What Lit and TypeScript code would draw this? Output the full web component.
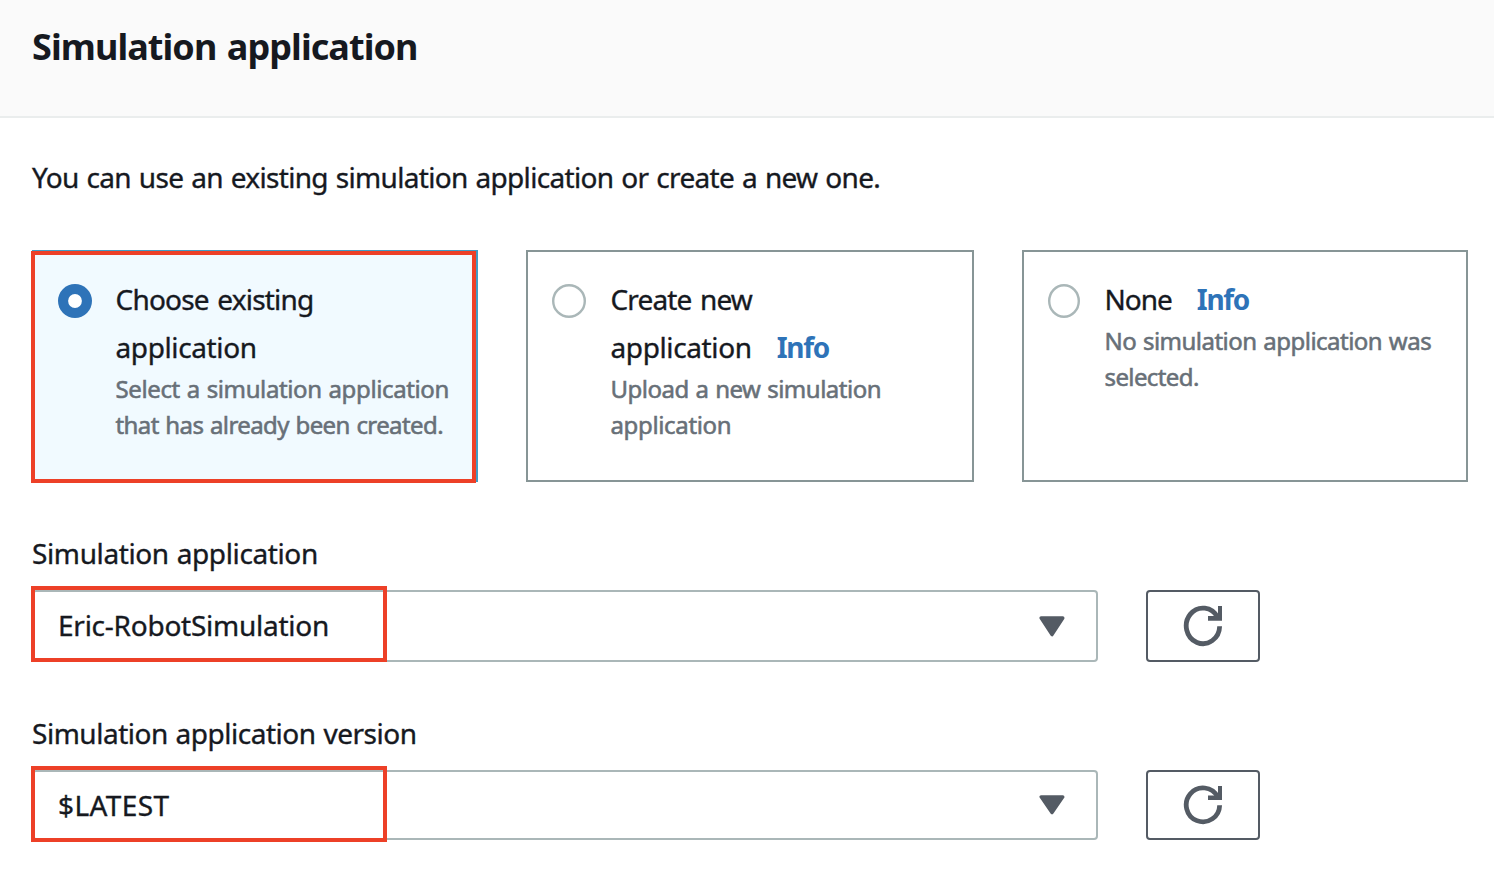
import { LitElement, html, css, nothing } from "lit";
import { customElement, property } from "lit/decorators.js";
import { classMap } from "lit/directives/class-map.js";

type Line = { text: string; track: string };

@customElement("option-tile")
export class OptionTile extends LitElement {
  @property({ attribute: false }) titleLines: Line[] = [];
  @property({ attribute: false }) textLines: Line[] = [];
  @property({ type: Boolean }) info = false;
  @property({ type: Boolean, reflect: true }) selected = false;
  @property() radio = "";

  static styles = css`
    :host { display: block; position: relative; height: 232px; }
    .tile {
      box-sizing: border-box; height: 100%; display: flex; padding: 23px 0 0 24px;
      border: 2px solid #879596; background: #fff;
    }
    .tile.selected { border-color: #429cc4; background: #f1faff; }
    .radio { flex: none; width: 34px; height: 34px; margin-top: 9px; display: block; }
    .body { margin-left: 23.5px; white-space: nowrap; }
    .narrow .radio { width: 32px; }
    .narrow .body { margin-left: 24.5px; }
    .wide .body { margin-left: 24.5px; }
    .title { height: 48px; font-size: 28px; line-height: 48px; color: #16191f; -webkit-text-stroke: 0.35px #16191f; }
    .text { height: 36px; font-size: 24px; line-height: 36px; color: #687078; word-spacing: 1px; -webkit-text-stroke: 0.55px #687078; }
    .info {
      margin-left: 25px; font-size: 28px; font-weight: 700; letter-spacing: -1.3px;
      color: #2e73b8; text-decoration: none; -webkit-text-stroke: 0;
    }
    .marker { position: absolute; left: -1px; top: 1px; width: 445px; height: 232px; box-sizing: border-box; border: 4px solid #ed4027; }
    .choose { letter-spacing: -0.8px; word-spacing: 2px; }
    .app { letter-spacing: -0.38px; }
    .create { letter-spacing: -0.85px; word-spacing: 2px; }
    .none { letter-spacing: -1px; }
    .select { letter-spacing: -0.38px; }
    .that { letter-spacing: -0.6px; }
    .upload { letter-spacing: -0.5px; }
    .uploadb { letter-spacing: -0.35px; }
    .nosim { letter-spacing: -0.52px; }
  `;

  private lines(lines: Line[], kind: string, tail: unknown = nothing) {
    return lines.map(
      (l, i) => html`<div class=${kind}><span class=${l.track}>${l.text}</span>${i === lines.length - 1 ? tail : nothing}</div>`
    );
  }

  render() {
    const narrow = this.radio === "narrow";
    const cx = narrow ? 16 : 17;
    return html`
      <div class=${classMap({ tile: true, selected: this.selected, narrow, wide: this.radio === "wide" })}>
        <svg class="radio" viewBox="0 0 ${cx * 2} 34">
          ${this.selected
            ? html`<svg><circle cx="17" cy="17" r="17" fill="#2e73b8" /><circle cx="17" cy="17" r="6.9" fill="#fff" /></svg>`
            : html`<svg><ellipse cx=${cx} cy="17" rx=${cx - 1.2} ry="15.8" fill="#fff" stroke="#aab7b8" stroke-width="2.4" /></svg>`}
        </svg>
        <div class="body">
          ${this.lines(this.titleLines, "title", this.info ? html`<a class="info">Info</a>` : nothing)}
          ${this.lines(this.textLines, "text")}
        </div>
      </div>
      ${this.selected ? html`<div class="marker"></div>` : nothing}
    `;
  }
}

@customElement("select-field")
export class SelectField extends LitElement {
  @property() label = "";
  @property() value = "";
  @property() kind = "";

  static styles = css`
    :host { display: block; font-size: 28px; color: #16191f; -webkit-text-stroke: 0.35px #16191f; white-space: nowrap; }
    .label { line-height: 42px; height: 58px; word-spacing: 1px; }
    .row { display: flex; gap: 48px; position: relative; }
    .select, .refresh { box-sizing: border-box; height: 72px; border-radius: 4px; background: #fff; display: flex; align-items: center; }
    .select { width: 1066px; border: 2px solid #aab7b8; padding: 0 31px 0 24px; justify-content: space-between; }
    .refresh { width: 114px; border: 2px solid #545b64; justify-content: center; }
    .version .select, .version .refresh { height: 70px; }
    .value { line-height: 66px; height: 68px; }
    .version .value { height: 66px; }
    .arrow { width: 26px; height: 21px; display: block; }
    .icon { width: 40px; height: 42px; display: block; }
    .version .icon { height: 40px; }
    .version .arrow { height: 20px; }
    .marker { position: absolute; left: -1px; top: -4px; width: 356px; height: 76px; box-sizing: border-box; border: 4px solid #ed4027; }
    .name .label { letter-spacing: -0.38px; }
    .name .value { letter-spacing: -0.25px; }
    .version .label { letter-spacing: -0.48px; }
    .version .value { letter-spacing: 0.4px; }
  `;

  render() {
    return html`
      <div class=${this.kind}>
        <div class="label">${this.label}</div>
        <div class="row">
          <div class="select">
            <span class="value">${this.value}</span>
            <svg class="arrow" viewBox="0 0 26 21" preserveAspectRatio="none">
              <path d="M2.2 2H23.8L13 18.6Z" fill="#545b64" stroke="#545b64" stroke-width="3.4" stroke-linejoin="round" />
            </svg>
          </div>
          <div class="refresh">
            <svg class="icon" viewBox="0 0 40 42" preserveAspectRatio="none">
              <path d="M36.65 21.2A16.7 17.8 0 1 1 34.6 12.3" fill="none" stroke="#545b64" stroke-width="4.8" />
              <path d="M35 1H39V15.7H25V11H31.5L35 8.5Z" fill="#545b64" />
            </svg>
          </div>
          <div class="marker"></div>
        </div>
      </div>
    `;
  }
}

@customElement("app-root")
export class AppRoot extends LitElement {
  static styles = css`
    :host { display: block; height: 874px; overflow: hidden; background: #fff; color: #16191f; font-family: "Noto Sans", "Open Sans", sans-serif; }
    header { box-sizing: border-box; height: 118px; padding: 20px 32px; background: #fafafa; border-bottom: 2px solid #eaeded; }
    h2 { margin: 0; font-size: 36px; line-height: 54px; font-weight: 700; letter-spacing: -0.93px; word-spacing: 2px; }
    main { padding: 35px 26px 0 32px; }
    .intro { margin: 0; font-size: 28px; line-height: 48px; letter-spacing: -0.68px; word-spacing: 1.3px; white-space: nowrap; -webkit-text-stroke: 0.35px #16191f; }
    .tiles { display: grid; grid-template-columns: 446px 448px 446px; gap: 48px; margin: 49px 0 50px; }
    .fields { display: grid; gap: 50px; }
  `;

  render() {
    return html`
      <header><h2>Simulation application</h2></header>
      <main>
        <p class="intro">You can use an existing simulation application or create a new one.</p>
        <div class="tiles">
          <option-tile selected
            .titleLines=${[{ text: "Choose existing", track: "choose" }, { text: "application", track: "app" }]}
            .textLines=${[{ text: "Select a simulation application", track: "select" }, { text: "that has already been created.", track: "that" }]}
          ></option-tile>
          <option-tile info radio="wide"
            .titleLines=${[{ text: "Create new", track: "create" }, { text: "application", track: "app" }]}
            .textLines=${[{ text: "Upload a new simulation", track: "upload" }, { text: "application", track: "uploadb" }]}
          ></option-tile>
          <option-tile info radio="narrow"
            .titleLines=${[{ text: "None", track: "none" }]}
            .textLines=${[{ text: "No simulation application was", track: "nosim" }, { text: "selected.", track: "that" }]}
          ></option-tile>
        </div>
        <div class="fields">
          <select-field kind="name" label="Simulation application" value="Eric-RobotSimulation"></select-field>
          <select-field kind="version" label="Simulation application version" value="$LATEST"></select-field>
        </div>
      </main>
    `;
  }
}
